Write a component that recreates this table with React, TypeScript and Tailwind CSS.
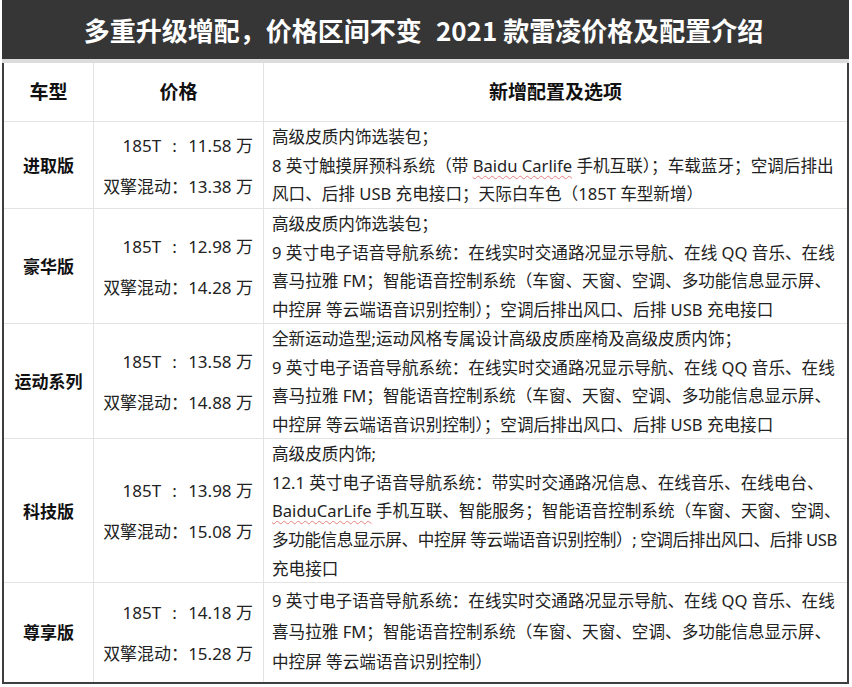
import React from "react";

const U = ({ children }: { children: React.ReactNode }) => (
  <span className="underline decoration-wavy decoration-[#e58080] decoration-1 underline-offset-[3px]">
    {children}
  </span>
);

type Row = {
  name: string;
  p1: string;
  p2: string;
  h: string;
  lines: React.ReactNode[];
  lh: string;
  pt: string;
};

const navLines = [
  "9 英寸电子语音导航系统：在线实时交通路况显示导航、在线 QQ 音乐、在线",
  "喜马拉雅 FM；智能语音控制系统（车窗、天窗、空调、多功能信息显示屏、",
  "中控屏 等云端语音识别控制）；空调后排出风口、后排 USB 充电接口",
];

const rows: Row[] = [
  {
    name: "进取版",
    p1: "11.58",
    p2: "13.38",
    h: "h-[87px]",
    lh: "leading-[28.7px]",
    pt: "pt-[1px]",
    lines: [
      "高级皮质内饰选装包；",
      <>
        8 英寸触摸屏预科系统（带 <U>Baidu Carlife</U> 手机互联）；车载蓝牙；空调后排出
      </>,
      "风口、后排 USB 充电接口；天际白车色（185T 车型新增）",
    ],
  },
  {
    name: "豪华版",
    p1: "12.98",
    p2: "14.28",
    h: "h-[115px]",
    lh: "leading-[28.7px]",
    pt: "pt-[1px]",
    lines: ["高级皮质内饰选装包；", ...navLines],
  },
  {
    name: "运动系列",
    p1: "13.58",
    p2: "14.88",
    h: "h-[115px]",
    lh: "leading-[28.7px]",
    pt: "pt-[1px]",
    lines: ["全新运动造型;运动风格专属设计高级皮质座椅及高级皮质内饰；", ...navLines],
  },
  {
    name: "科技版",
    p1: "13.98",
    p2: "15.08",
    h: "h-[144px]",
    lh: "leading-[28.7px]",
    pt: "pt-[1px]",
    lines: [
      "高级皮质内饰;",
      "12.1 英寸电子语音导航系统：带实时交通路况信息、在线音乐、在线电台、",
      <>
        <U>BaiduCarLife</U> 手机互联、智能服务；智能语音控制系统（车窗、天窗、空调、
      </>,
      <span className="tracking-[-0.4px]">
        多功能信息显示屏、中控屏 等云端语音识别控制）; 空调后排出风口、后排 USB
      </span>,
      "充电接口",
    ],
  },
  {
    name: "尊享版",
    p1: "14.18",
    p2: "15.28",
    h: "h-[100px]",
    lh: "leading-[30.5px]",
    pt: "pt-[3px]",
    lines: [navLines[0], navLines[1], "中控屏 等云端语音识别控制）"],
  },
];

export default function App() {
  return (
    <div
      className="w-[852px] h-[687px] bg-white text-[#222]"
      style={{ fontFamily: '"Noto Sans", "Noto Sans CJK SC", sans-serif' }}
    >
      <div className="ml-[2px] w-[847px] h-[63px] bg-[#363636] border-b-4 border-[#dcdcdc] flex items-center justify-center">
        <div
          className="text-white font-bold text-[26px] leading-[59px] whitespace-nowrap pr-[4px]"
          style={{ fontFamily: '"Noto Sans CJK SC", sans-serif' }}
        >
          多重升级增配，价格区间不变<span className="inline-block w-[14px]" />2021 款雷凌价格及配置介绍
        </div>
      </div>
      <div className="ml-[2px] w-[847px] border-x-2 border-b-2 border-[#3e3e3e]">
        <div className="grid grid-cols-[89px_170px_1fr] h-[58px] text-[19px] font-bold text-[#111]">
          <div className="flex items-center justify-center">车型</div>
          <div className="flex items-center justify-center border-l border-[#e3e3e3]">价格</div>
          <div className="flex items-center justify-center border-l border-[#e3e3e3]">新增配置及选项</div>
        </div>
        {rows.map((r) => (
          <div
            key={r.name}
            className={`grid grid-cols-[89px_170px_1fr] border-t border-[#e3e3e3] ${r.h}`}
          >
            <div className="flex items-center justify-center font-bold text-[#111] text-[17px]">{r.name}</div>
            <div className="flex flex-col items-end justify-center pr-[10px] border-l border-[#e3e3e3] leading-[41px] whitespace-nowrap text-[17px]">
              <div>
                185T<span className="inline-block w-[27px] text-center">:</span>
                {r.p1} 万
              </div>
              <div>双擎混动：{r.p2} 万</div>
            </div>
            <div className={`border-l border-[#e3e3e3] pl-[8px] text-[16.6px] ${r.pt} ${r.lh}`}>
              {r.lines.map((l, i) => (
                <div key={i} className="whitespace-nowrap">
                  {l}
                </div>
              ))}
            </div>
          </div>
        ))}
      </div>
    </div>
  );
}
